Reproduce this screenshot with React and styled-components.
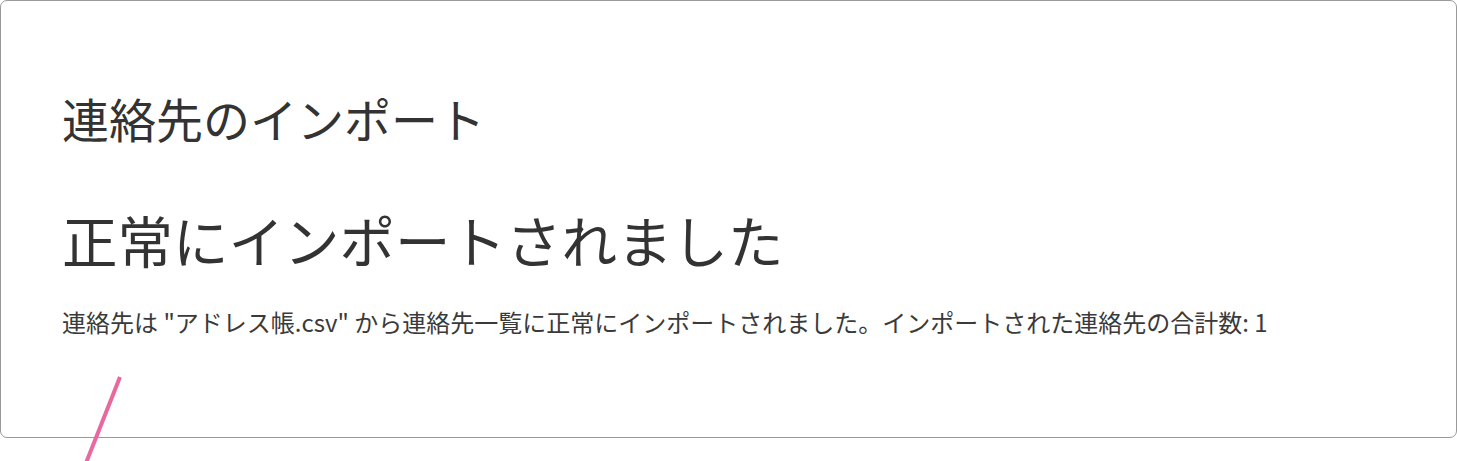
import React from 'react'
import styled, { createGlobalStyle } from 'styled-components'

const GlobalStyle = createGlobalStyle`
  html, body {
    margin: 0;
    padding: 0;
    background: #fff;
  }
  body {
    font-family: "Noto Sans CJK JP", "Noto Sans", sans-serif;
    color: #333;
  }
`

const Page = styled.div`
  position: relative;
  width: 1457px;
  height: 461px;
  overflow: hidden;
`

const Card = styled.section`
  box-sizing: border-box;
  width: 1457px;
  height: 438px;
  border: 1px solid #999;
  border-radius: 7px;
  padding: 88px 61px 0;
  display: flex;
  flex-direction: column;
`

const Title = styled.h1`
  margin: 0;
  font-size: 47px;
  font-weight: 400;
  line-height: 58px;
  color: #333;
`

const Status = styled.h2`
  margin: 57px 0 0;
  font-size: 55.5px;
  font-weight: 400;
  line-height: 70px;
  color: #333;
`

const Message = styled.p`
  margin: 33px 0 0;
  font-size: 24px;
  line-height: 30px;
  color: #3a3a3a;
`

const Marker = styled.svg`
  position: absolute;
  left: 0;
  top: 0;
  pointer-events: none;
`

export default function App() {
  return (
    <Page>
      <GlobalStyle />
      <Card>
        <Title>連絡先のインポート</Title>
        <Status>正常にインポートされました</Status>
        <Message>
          連絡先は "アドレス帳.csv" から連絡先一覧に正常にインポートされました。インポートされた連絡先の合計数: 1
        </Message>
      </Card>
      <Marker width="1457" height="461">
        <line x1="120" y1="377" x2="86" y2="463" stroke="#e8699f" strokeWidth="4" />
      </Marker>
    </Page>
  )
}
